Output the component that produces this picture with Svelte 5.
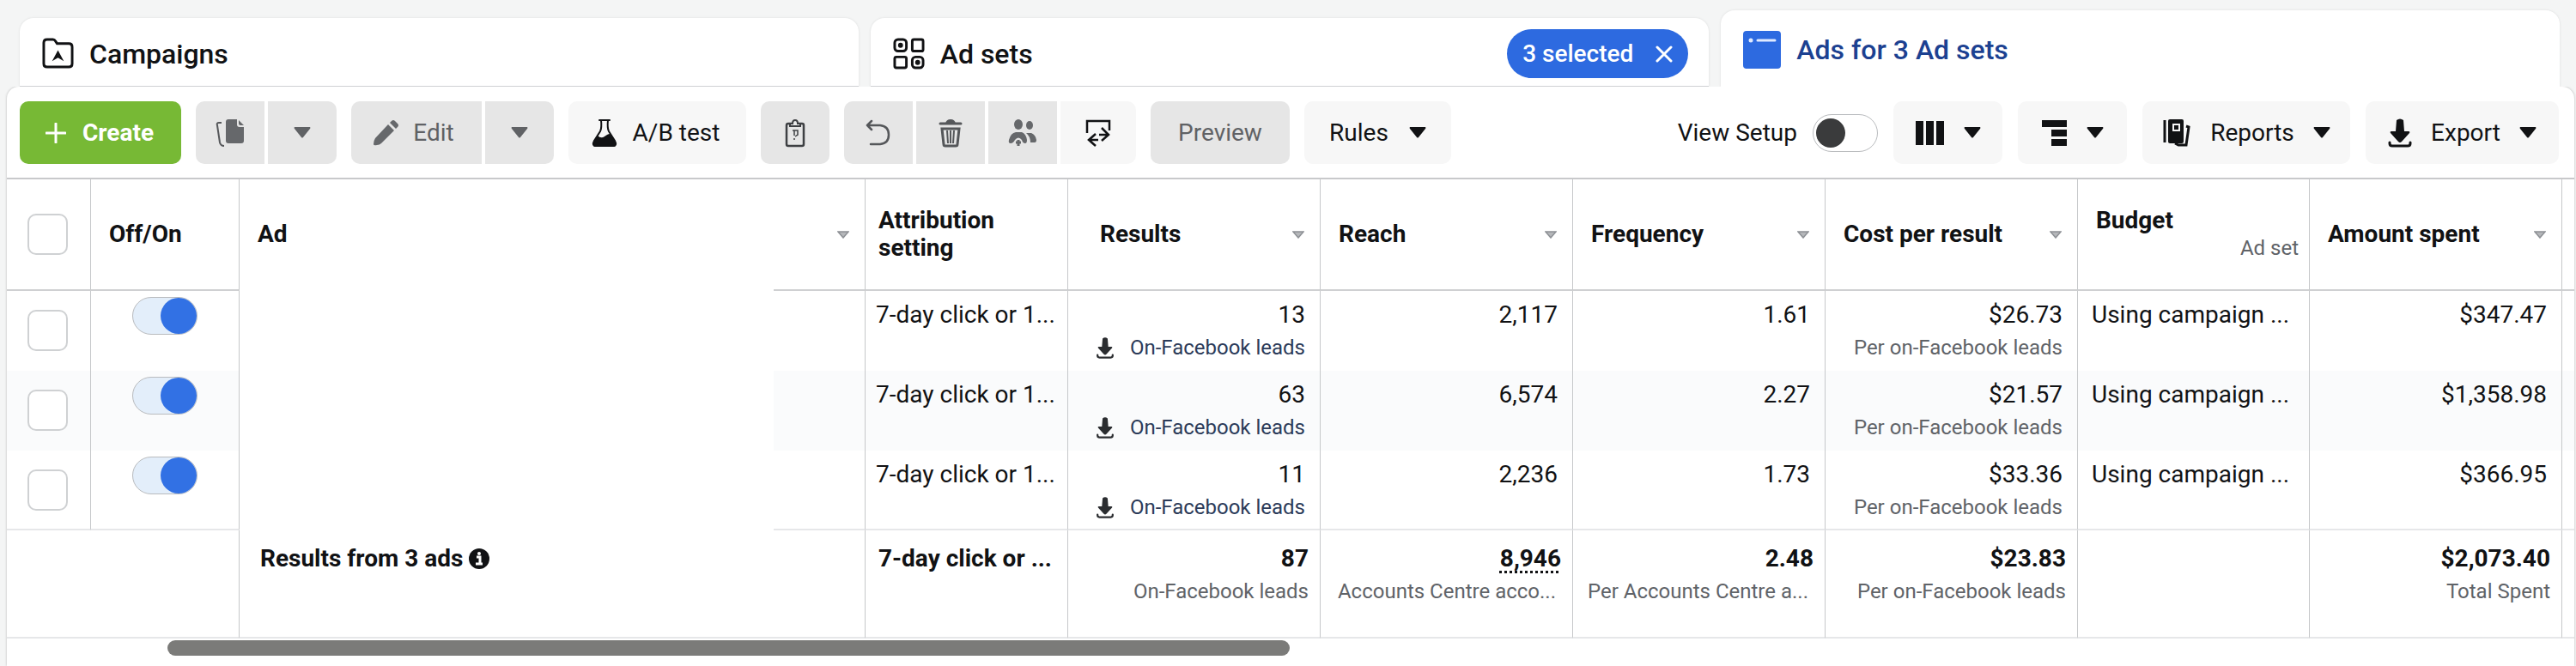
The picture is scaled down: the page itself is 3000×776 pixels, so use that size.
<script>
  const rows = [
    { results: "13", reach: "2,117", frequency: "1.61", cost: "$26.73", spent: "$347.47" },
    { results: "63", reach: "6,574", frequency: "2.27", cost: "$21.57", spent: "$1,358.98" },
    { results: "11", reach: "2,236", frequency: "1.73", cost: "$33.36", spent: "$366.95" }
  ];
  let enabled = $state([true, true, true]);
  let viewSetup = $state(false);
</script>

{#snippet caret()}
  <svg class="caret" viewBox="0 0 20 13"><path d="M1 0h18q1 1 0 2l-8 10q-1 1-2 0l-8-10q-1-1 0-2z" fill="currentColor" /></svg>
{/snippet}

{#snippet sort()}
  <svg class="sort" viewBox="0 0 14 9"><path d="M1 1h12l-6 7z" fill="#b5b7ba" stroke="#8d9095" stroke-width="1.5" /></svg>
{/snippet}

{#snippet download()}
  <svg viewBox="0 0 28 34"><path d="M10 2q4-3 8 0l1 13h5q2 0 1 2l-9 10q-2 2-4 0l-9-10q-1-2 1-2h5z" fill="currentColor" /><path d="M2 28v1q0 3 3 3h18q3 0 3-3v-1" fill="none" stroke="currentColor" stroke-width="3" stroke-linecap="round" /></svg>
{/snippet}

<main>
  <nav class="tabs">
    <a class="tab" href="#campaigns">
      <svg width="37" height="37" viewBox="0 0 38 38" fill="none" stroke="#111214" stroke-width="3">
        <path d="M2 6q0-4 4-4h7q2 0 3 2l2 3h14q4 0 4 4v20q0 4-4 4H6q-4 0-4-4z" />
        <path d="M19 15l7 13-7-4-7 4z" fill="#111214" stroke="none" />
      </svg>
      Campaigns
    </a>
    <div class="tab">
      <a href="#adsets">
        <svg width="37" height="37" viewBox="0 0 38 38" fill="none" stroke="#111214" stroke-width="3">
          <rect x="2" y="2" width="14" height="14" rx="4" />
          <rect x="23" y="2" width="13" height="14" rx="2" />
          <rect x="2" y="23" width="14" height="13" rx="2" />
          <rect x="23" y="23" width="13" height="13" rx="4" />
          <circle cx="9" cy="9" r="1.500" />
          <circle cx="29.500" cy="29.500" r="1.500" />
        </svg>
        Ad sets
      </a>
      <button class="pill">
        3 selected
        <svg width="20" height="20" viewBox="0 0 20 20"><path d="M2 2l16 16M18 2L2 18" stroke="#fff" stroke-width="3" stroke-linecap="round" /></svg>
      </button>
    </div>
    <a class="tab active" href="#ads">
      <svg width="44" height="44" viewBox="0 0 44 44">
        <rect width="44" height="44" rx="4" fill="#2d6ae0" />
        <circle cx="9" cy="11" r="2.500" fill="#dfeaff" />
        <path d="M17 11h20" stroke="#dfeaff" stroke-width="3" stroke-linecap="round" />
      </svg>
      Ads for 3 Ad sets
    </a>
  </nav>

  <section class="panel">
    <div class="toolbar">
      <button class="create">
        <svg width="24" height="24" viewBox="0 0 24 24"><path d="M12 1v22M1 12h22" stroke="#fff" stroke-width="3" stroke-linecap="round" /></svg>
        Create
      </button>

      <div class="group">
        <button class="gray square" aria-label="Duplicate">
          <svg width="34" height="34" viewBox="0 0 34 34">
            <path d="M15 1h10v6q0 3 3 3h5v16q0 3-3 3H15q-3 0-3-3V4q0-3 3-3zM27 2l6 6h-4q-2 0-2-2z" fill="#66686b" />
            <path d="M7 5H4Q1 5 2 8l3 20q1 4 5 4" fill="none" stroke="#55575a" stroke-width="2" />
          </svg>
        </button>
        <button class="gray square" aria-label="Duplicate options">{@render caret()}</button>
      </div>

      <div class="group">
        <button class="gray edit">
          <svg width="32" height="32" viewBox="0 0 32 32" fill="#66686b">
            <path d="M19 6l7 7-15 15q-2 2-5 2-4 1-4-1 0-4 2-7z" />
            <path d="M21 4l2-2q2-2 4 0l3 3q2 2 0 4l-2 2z" />
          </svg>
          Edit
        </button>
        <button class="gray square" aria-label="Edit options">{@render caret()}</button>
      </div>

      <button class="light ab">
        <svg width="30" height="34" viewBox="0 0 30 34">
          <path d="M9 2h12M11 2q1 9-1 13L3 26q-3 6 2 6h20q5 0 2-6l-7-11q-2-4-1-13" fill="none" stroke="#111214" stroke-width="2" stroke-linecap="round" />
          <path d="M7 20q4 4 8 1t6-3l7 9q2 6-3 6H5q-5 0-3-6z" fill="#111214" />
        </svg>
        A/B test
      </button>

      <button class="gray square" aria-label="Copy">
        <svg width="26" height="34" viewBox="0 0 26 34" fill="none" stroke="#3e4043" stroke-width="2.500">
          <rect x="3" y="6" width="20" height="26" rx="2" />
          <path d="M7 9V6h3q0-4 3-4t3 4h3v3z" fill="#ececec" stroke-width="2" />
          <path d="M10 14h6v5l-3 2M12 14v6M12 23v2" stroke-width="1.500" />
        </svg>
      </button>

      <div class="group">
        <button class="gray square" aria-label="Undo">
          <svg width="30" height="32" viewBox="0 0 30 32" fill="none" stroke="#55575a" stroke-width="2.500" stroke-linecap="round" stroke-linejoin="round">
            <path d="M7 2L2 7l5 5M2 7h15q10 1 10 11t-10 11H6" />
          </svg>
        </button>
        <button class="gray square" aria-label="Delete">
          <svg width="30" height="34" viewBox="0 0 30 34" fill="none" stroke="#55575a">
            <path d="M3 6h24" stroke-width="3" stroke-linecap="round" />
            <path d="M9 6q1-5 6-5t6 5z" fill="#55575a" stroke="none" />
            <path d="M5 12h20l-2 18q0 2-2 2H9q-2 0-2-2z" stroke-width="3" />
            <path d="M11 14l1 15M15 14v15M19 14l-1 15" stroke-width="2" />
          </svg>
        </button>
        <button class="gray square" aria-label="Audience">
          <svg width="34" height="34" viewBox="0 0 34 34" fill="#66686b">
            <ellipse cx="12" cy="7" rx="5" ry="6" />
            <ellipse cx="25" cy="8" rx="4" ry="5" />
            <path d="M3 29q-3 0-2-4 2-8 8-9h7q5 2 6 9 0 4-2 4-3 0-4-4-4-5-8 0-2 4-5 4z" />
            <path d="M21 17h6q5 2 6 8 0 3-2 3h-5q0-7-5-11z" />
            <path d="M12 25v7M9 28h6" stroke="#66686b" stroke-width="3" />
          </svg>
        </button>
        <button class="light swap" aria-label="Swap">
          <svg width="30" height="34" viewBox="0 0 30 34" fill="none" stroke="#111214" stroke-width="2.500">
            <path d="M2 17V3h26v11" />
            <path d="M12 18l-8 7 8 7M4 25h11M19 11l8 8-8 7M27 19H16" />
          </svg>
        </button>
      </div>

      <button class="gray preview">Preview</button>
      <button class="light rules">Rules {@render caret()}</button>

      <div class="right">
        <label class="setup">
          View Setup
          <input class="switch" type="checkbox" role="switch" bind:checked={viewSetup} />
        </label>
        <button class="light menu" aria-label="Columns">
          <svg width="34" height="28" viewBox="0 0 34 28" fill="#111214">
            <rect width="9" height="28" /><rect x="12" width="9" height="28" /><rect x="24" width="9" height="28" />
          </svg>
          {@render caret()}
        </button>
        <button class="light menu" aria-label="Breakdown">
          <svg width="30" height="30" viewBox="0 0 30 30" fill="#111214">
            <rect width="29" height="8" /><rect x="11" y="11" width="18" height="8" /><rect x="11" y="22" width="18" height="8" />
          </svg>
          {@render caret()}
        </button>
        <button class="light reports">
          <svg width="34" height="34" viewBox="0 0 34 34">
            <path d="M3 2v26M28 9l3 1-3 21h-9l-4-2" fill="none" stroke="#111214" stroke-width="3" />
            <rect x="7" y="1" width="18" height="28" rx="2" fill="#111214" />
            <rect x="13" y="7" width="7" height="7" fill="none" stroke="#f5f5f5" stroke-width="2" />
          </svg>
          Reports {@render caret()}
        </button>
        <button class="light export">{@render download()} Export {@render caret()}</button>
      </div>
    </div>

    <table>
      <colgroup>
        <col class="c-check" /><col class="c-onoff" /><col class="c-ad" /><col class="c-attr" /><col class="c-num" /><col class="c-num" />
        <col class="c-num" /><col class="c-num" /><col class="c-budget" /><col class="c-num" /><col />
      </colgroup>
      <thead>
        <tr>
          <th><input class="check" type="checkbox" aria-label="Select all" /></th>
          <th>Off/On</th>
          <th><div class="head">Ad {@render sort()}</div></th>
          <th class="tight">Attribution<br />setting</th>
          <th class="indent"><div class="head">Results {@render sort()}</div></th>
          <th><div class="head">Reach {@render sort()}</div></th>
          <th><div class="head">Frequency {@render sort()}</div></th>
          <th><div class="head">Cost per result {@render sort()}</div></th>
          <th class="budget">Budget<small>Ad set</small></th>
          <th><div class="head">Amount spent {@render sort()}</div></th>
          <th class="rest"></th>
        </tr>
      </thead>
      <tbody>
        {#each rows as row, i}
          <tr>
            <td class="select"><input class="check" type="checkbox" aria-label="Select ad {i + 1}" /></td>
            <td class="onoff"><input class="switch on" type="checkbox" role="switch" aria-label="Ad {i + 1} on" bind:checked={enabled[i]} /></td>
            <td class="name"></td>
            <td class="text">7-day click or 1...</td>
            <td class="num">{row.results}<small class="lead">{@render download()}On-Facebook leads</small></td>
            <td class="num">{row.reach}</td>
            <td class="num">{row.frequency}</td>
            <td class="num">{row.cost}<small>Per on-Facebook leads</small></td>
            <td class="plan">Using campaign ...</td>
            <td class="num">{row.spent}</td>
            <td class="rest"></td>
          </tr>
        {/each}
      </tbody>
      <tfoot>
        <tr>
          <td colspan="2"></td>
          <td class="total">
            Results from 3 ads
            <svg width="24" height="24" viewBox="0 0 24 24"><circle cx="12" cy="12" r="12" fill="#111214" /><circle cx="12" cy="6" r="2" fill="#fff" /><path d="M9 10h4v8M8 18h8" fill="none" stroke="#fff" stroke-width="3" /></svg>
          </td>
          <td>7-day click or ...</td>
          <td class="num">87<small>On-Facebook leads</small></td>
          <td class="num"><span class="dotted">8,946</span><small class="cut">Accounts Centre acco...</small></td>
          <td class="num">2.48<small class="cut">Per Accounts Centre a...</small></td>
          <td class="num">$23.83<small>Per on-Facebook leads</small></td>
          <td></td>
          <td class="num">$2,073.40<small>Total Spent</small></td>
          <td class="rest"></td>
        </tr>
      </tfoot>
    </table>
    <div class="track"><div class="thumb"></div></div>
  </section>
</main>

<style>
  :global(body) {
    background: #f4f5f5;
  }
  main {
    min-height: 100vh;
    box-sizing: border-box;
    padding: 12px 2px 0 8px;
    display: flex;
    flex-direction: column;
    font-family: Roboto, "Liberation Sans", sans-serif;
    font-size: 28px;
    color: #111214;
  }
  button {
    font: inherit;
    color: inherit;
    border: 0;
    margin: 0;
    padding: 0;
    display: flex;
    align-items: center;
    justify-content: center;
    white-space: nowrap;
  }
  a {
    color: inherit;
    text-decoration: none;
  }
  svg {
    flex: none;
  }
  .tabs {
    display: flex;
    align-items: flex-end;
    gap: 14px;
    padding: 0 17px 0 15px;
  }
  .tab {
    flex: 1;
    height: 80px;
    box-sizing: border-box;
    padding: 4px 24px 0 26px;
    display: flex;
    align-items: center;
    gap: 18px;
    background: #fff;
    border-bottom: 1px solid #cfd1d3;
    border-radius: 16px 16px 0 0;
    box-shadow: 0 0 3px rgba(0, 0, 0, 0.1);
    font-size: 32px;
    font-weight: 500;
  }
  .tab a {
    display: flex;
    align-items: center;
    gap: 18px;
  }
  .tab.active {
    height: 89px;
    border-color: #fff;
    color: #1c4191;
  }
  .pill {
    margin-left: auto;
    height: 57px;
    padding: 0 18px;
    gap: 26px;
    border-radius: 29px;
    background: #2d6ae0;
    color: #fff;
    font-size: 28px;
  }
  .panel {
    flex: 1;
    background: #fff;
    border-radius: 14px 14px 0 0;
    box-shadow: 0 0 3px rgba(0, 0, 0, 0.25);
    clip-path: inset(0 -4px 0 -4px);
  }
  .toolbar {
    display: flex;
    gap: 17px;
    padding: 17px 18px 16px 15px;
  }
  .toolbar button {
    height: 73px;
    border-radius: 10px;
  }
  .toolbar .create {
    width: 188px;
    gap: 19px;
    padding-right: 2px;
    background: #77b935;
    color: #fff;
    font-weight: 700;
  }
  .gray {
    background: #e6e6e6;
    color: #606265;
  }
  .light {
    background: #f7f7f7;
  }
  .square {
    width: 80px;
  }
  .group {
    display: flex;
    gap: 4px;
  }
  .group button:not(:first-child) {
    border-top-left-radius: 0;
    border-bottom-left-radius: 0;
  }
  .group button:not(:last-child) {
    border-top-right-radius: 0;
    border-bottom-right-radius: 0;
  }
  .toolbar .edit {
    width: 152px;
    gap: 16px;
    padding-right: 8px;
  }
  .toolbar .ab {
    width: 207px;
    gap: 18px;
    padding-right: 4px;
  }
  .swap {
    width: 88px;
  }
  .preview {
    width: 162px;
  }
  .rules {
    width: 171px;
    gap: 24px;
  }
  .caret {
    width: 20px;
    height: 13px;
  }
  .right {
    margin-left: auto;
    display: flex;
    align-items: center;
    gap: 18px;
  }
  .right button {
    gap: 22px;
  }
  .menu {
    width: 127px;
  }
  .reports {
    width: 242px;
  }
  .export {
    width: 225px;
  }
  .export :global(svg:first-child) {
    width: 28px;
    height: 34px;
  }
  .setup {
    display: flex;
    align-items: center;
    gap: 18px;
  }
  input {
    appearance: none;
    display: block;
    margin: 0;
    box-sizing: border-box;
    background: #fff;
  }
  .switch {
    width: 76px;
    height: 44px;
    padding: 4px 3px;
    border: 1px solid #b9bbbe;
    border-radius: 22px;
  }
  .switch::before {
    content: "";
    display: block;
    width: 34px;
    height: 34px;
    border-radius: 50%;
    background: #3a3b3c;
  }
  .switch.on {
    padding: 0;
    background: #e3eefa;
  }
  .switch:checked::before {
    margin-left: auto;
    width: 42px;
    height: 42px;
    background: #3271e4;
  }
  .check {
    width: 47px;
    height: 48px;
    border: 2px solid #cfd1d3;
    border-radius: 10px;
  }
  table {
    width: 100%;
    table-layout: fixed;
    border-collapse: separate;
    border-spacing: 0;
    border-top: 2px solid #c8c9cb;
    line-height: 38px;
  }
  .c-check { width: 98px; }
  .c-onoff { width: 173px; }
  .c-ad { width: 729px; }
  .c-attr { width: 236px; }
  .c-num { width: 294px; }
  .c-budget { width: 270px; }
  th,
  td {
    box-sizing: border-box;
    padding: 0;
    border-right: 1px solid #c6c8ca;
    text-align: left;
    white-space: nowrap;
  }
  th {
    height: 130px;
    padding: 0 18px 0 21px;
    border-bottom: 2px solid #cfd0d2;
    font-weight: 700;
  }
  th:first-child {
    padding: 0 0 0 24px;
  }
  th.tight {
    padding-left: 15px;
    line-height: 32px;
  }
  th.indent {
    padding-left: 37px;
  }
  th.budget {
    padding-right: 12px;
    line-height: 32px;
  }
  .head {
    display: flex;
    align-items: center;
    justify-content: space-between;
  }
  .sort {
    width: 14px;
    height: 9px;
  }
  tbody td {
    height: 93px;
    padding: 9px 17px 0 12px;
    vertical-align: top;
  }
  tbody tr:nth-child(2) {
    background: #fafbfc;
  }
  tbody tr:last-child td {
    border-bottom: 2px solid #e6e7e9;
  }
  tbody .select {
    padding: 22px 0 0 24px;
  }
  tbody .onoff {
    padding: 7px 0 0 48px;
  }
  tbody .plan {
    padding-left: 16px;
  }
  .name {
    position: relative;
  }
  .name::before {
    content: "";
    position: absolute;
    top: -2px;
    bottom: -2px;
    left: 0;
    width: 622px;
    background: #fff;
  }
  small {
    display: block;
    font-size: 24px;
    font-weight: 400;
    color: #606368;
  }
  .budget small {
    text-align: right;
  }
  .num {
    text-align: right;
  }
  .lead {
    display: flex;
    align-items: center;
    justify-content: flex-end;
    gap: 18px;
    color: #2c3b59;
  }
  .lead :global(svg) {
    width: 22px;
    height: 25px;
    color: #2b2d30;
  }
  tfoot td {
    height: 126px;
    padding: 14px 13px 0 15px;
    border-bottom: 2px solid #e6e7e9;
    vertical-align: top;
    font-weight: 700;
  }
  tfoot .total {
    padding-left: 24px;
  }
  .total svg {
    vertical-align: -3px;
  }
  .cut {
    padding-right: 6px;
  }
  .dotted {
    text-decoration: underline dotted 3px;
    text-underline-offset: 5px;
  }
  tbody .rest,
  tfoot .rest,
  .rest {
    padding: 0;
    border-right: 0;
  }
  .track {
    padding: 2px 0 11px 187px;
  }
  .thumb {
    width: 1307px;
    height: 18px;
    border-radius: 9px;
    background: #7b7b79;
  }
</style>
